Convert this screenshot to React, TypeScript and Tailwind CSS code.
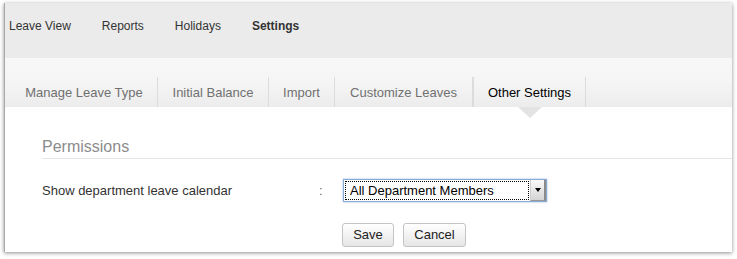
const navItems = ["Leave View", "Reports", "Holidays", "Settings"];

const tabs = [
  { label: "Manage Leave Type", w: "w-[147px]" },
  { label: "Initial Balance", w: "w-[111px]" },
  { label: "Import", w: "w-[66px]" },
  { label: "Customize Leaves", w: "w-[138px]" },
  { label: "Other Settings", w: "w-[113px]" },
];

const App = () => {
  const active = "Other Settings";

  return (
    <div className="w-[737px] h-[259px] bg-white pl-[4px] pt-[3px] font-['Liberation_Sans',Arial,sans-serif]">
      <div className="w-[728px] h-[249px] bg-white border-l border-[#a9a9a9] shadow-[0_1px_4px_rgba(0,0,0,0.45)] flex flex-col overflow-hidden">
        {/* top nav */}
        <div className="h-[55px] shrink-0 bg-[#ebebeb] flex gap-[31px] pl-[4px] pt-[16px] text-[12px] leading-[14px] text-[#333]">
          {navItems.map((item) => (
            <span key={item} className={item === "Settings" ? "font-bold" : ""}>
              {item}
            </span>
          ))}
        </div>

        {/* tab bar */}
        <div className="h-[49px] shrink-0 border-t border-[#f9f9f9] bg-gradient-to-b from-[#f7f7f7] via-[#f5f5f5] to-[#ececec] flex items-end pl-[6px]">
          {tabs.map((t) => (
            <div
              key={t.label}
              className={`${t.w} relative h-[30px] pt-[1px] border-r border-[#dcdcdc] flex items-center justify-center text-[13px] whitespace-nowrap ${
                t.label === active ? "text-black" : "text-[#707070]"
              } ${t.label === "Other Settings" ? "border-l border-l-[#dcdcdc]" : ""}`}
            >
              {t.label}
              {t.label === active && (
                <span className="absolute left-1/2 -translate-x-1/2 top-full w-0 h-0 border-l-[12px] border-r-[12px] border-t-[11px] border-l-transparent border-r-transparent border-t-[#e3e3e3] z-10" />
              )}
            </div>
          ))}
        </div>

        {/* content */}
        <div className="flex-1 pl-[37px] pt-[31px]">
          <div className="text-[16px] leading-[18px] text-[#8c8c8c] pb-[2px] border-b border-[#e6e6e6]">
            Permissions
          </div>

          <div className="flex items-center mt-[20px] h-[23px]">
            <span className="w-[277px] text-[13px] text-[#333]">
              Show department leave calendar
            </span>
            <span className="text-[13px] text-[#666] w-[4px]">:</span>
            <div className="ml-[20px] w-[204px] h-[23px] border border-[#8aaad4] shadow-[0_0_2px_rgba(90,140,210,0.6)] bg-white flex">
              <div className="flex-1 m-[1px] border border-dotted border-black flex items-center pl-[4px] text-[13px] text-black">
                All Department Members
              </div>
              <div className="w-[16px] bg-gradient-to-b from-[#fafafa] to-[#d4d4d4] border-l border-[#cfcfcf] border-r-2 border-r-[#8a8a8a] border-b border-b-[#999] flex items-center justify-center">
                <span className="w-0 h-0 border-l-[3px] border-r-[3px] border-t-[4px] border-l-transparent border-r-transparent border-t-black" />
              </div>
            </div>
          </div>

          <div className="flex gap-[9px] mt-[21px] ml-[300px]">
            <button className="w-[52px] h-[24px] rounded-[3px] border border-[#c4c4c4] bg-gradient-to-b from-white to-[#e6e6e6] text-[13px] text-[#222]">
              Save
            </button>
            <button className="w-[63px] h-[24px] rounded-[3px] border border-[#c4c4c4] bg-gradient-to-b from-white to-[#e6e6e6] text-[13px] text-[#222]">
              Cancel
            </button>
          </div>
        </div>
      </div>
    </div>
  );
};

export default App;
